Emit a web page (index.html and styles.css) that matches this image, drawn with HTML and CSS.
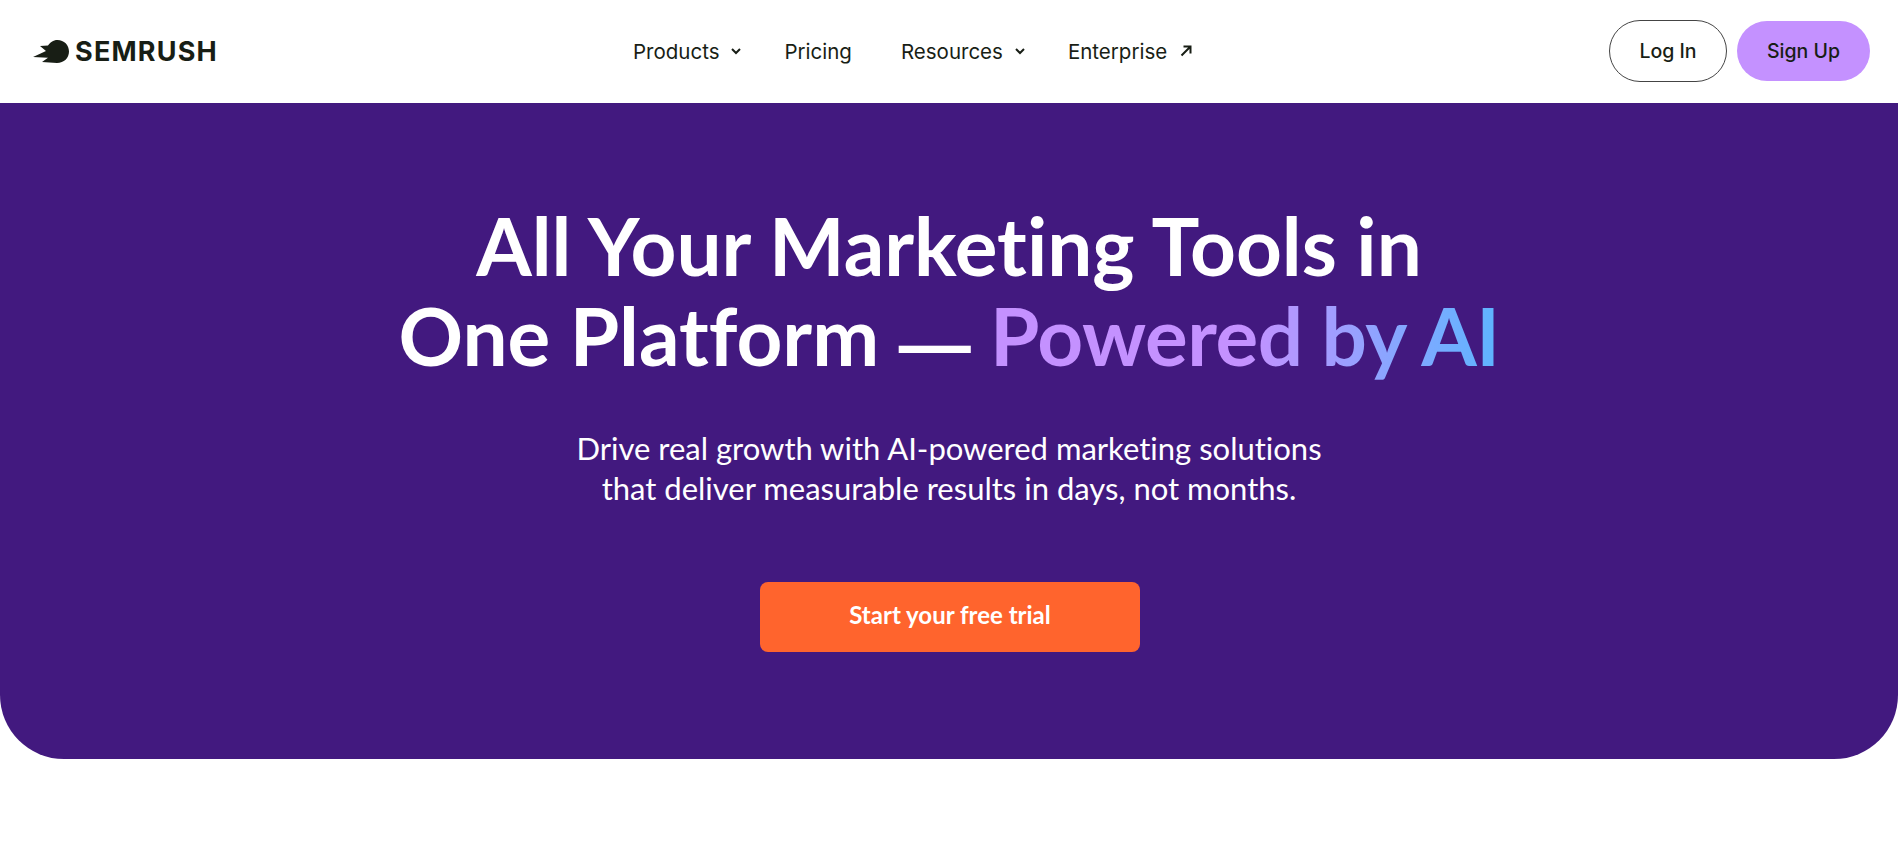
FILE: index.html
```html
<!DOCTYPE html>
<html lang="en">
<head>
    <meta charset="UTF-8">
    <meta name="viewport" content="width=device-width, initial-scale=1.0">
    <title>Semrush</title>
    <link rel="stylesheet" href="styles.css">
</head>
<body>
    <header class="topbar">
        <a class="logo" href="#">
            <svg class="logo-mark" viewBox="0 0 36 23" width="36" height="23">
                <path d="M36 11.500C36 18 31 23 24 23L9 22L15 17.800L0 17L13 11L7 6L15 5.500C17 2.500 20 0 24.500 0C31 0 36 5 36 11.500Z" fill="#181e15"/>
            </svg>
            <span class="logo-text">SEMRUSH</span>
        </a>
        <nav class="menu">
            <a class="menu-item" href="#">Products
                <svg class="chev" viewBox="0 0 12 8" width="12" height="8"><path d="M2 2l4 4 4-4" fill="none" stroke="#181e15" stroke-width="2"/></svg>
            </a>
            <a class="menu-item" href="#">Pricing</a>
            <a class="menu-item" href="#">Resources
                <svg class="chev" viewBox="0 0 12 8" width="12" height="8"><path d="M2 2l4 4 4-4" fill="none" stroke="#181e15" stroke-width="2"/></svg>
            </a>
            <a class="menu-item" href="#">Enterprise
                <svg class="arrow" viewBox="0 0 12 12" width="12" height="12"><path d="M1.500 10.500L10 2M3.500 1.500H10.500V8.500" fill="none" stroke="#181e15" stroke-width="2"/></svg>
            </a>
        </nav>
        <div class="auth">
            <a class="btn btn-login" href="#">Log In</a>
            <a class="btn btn-signup" href="#">Sign Up</a>
        </div>
    </header>

    <section class="hero">
        <h1>All Your Marketing Tools in<br>One Platform <span class="dash">—</span> <span class="accent">Powered by AI</span></h1>
        <p>Drive real growth with AI-powered marketing solutions<br>that deliver measurable results in days, not months.</p>
        <a class="cta" href="#">Start your free trial</a>
    </section>
</body>
</html>
```

FILE: styles.css
```css
* {
    box-sizing: border-box;
}
body {
    margin: 0;
    background: #fff;
    color: #181e15;
    font-family: Inter, sans-serif;
}
a {
    color: inherit;
    text-decoration: none;
}
.topbar {
    display: flex;
    align-items: center;
    height: 103px;
    padding: 0 28px 1px 33px;
}
.logo {
    display: flex;
    align-items: center;
    gap: 6px;
    width: 600px;
}
.logo-text {
    font-size: 27px;
    font-weight: 700;
    letter-spacing: 1.2px;
}
.menu {
    display: flex;
    align-items: center;
    flex: 1;
    gap: 49px;
    font-size: 20.500px;
}
.menu-item {
    display: flex;
    align-items: center;
    gap: 11px;
}
.chev {
    margin-right: -7px;
}
.arrow {
    margin-left: 2px;
}
.auth {
    display: flex;
    align-items: center;
    gap: 10px;
}
.btn {
    display: flex;
    align-items: center;
    justify-content: center;
    height: 60px;
    border-radius: 30px;
    font-size: 19.500px;
    font-weight: 500;
}
.btn-login {
    width: 118px;
    height: 62px;
    border-radius: 31px;
    border: 1px solid #444;
}
.btn-signup {
    width: 133px;
    background: #c491ff;
}
.hero {
    display: flex;
    flex-direction: column;
    align-items: center;
    height: 656px;
    padding-top: 97px;
    background: #42197f;
    border-radius: 0 0 64px 64px;
    color: #fff;
    font-family: Lato, sans-serif;
    font-variant-ligatures: none;
    text-align: center;
}
.hero h1 {
    margin: 0;
    font-size: 80px;
    font-weight: 700;
    line-height: 90px;
}
.dash {
    font-family: "Liberation Sans", sans-serif;
    font-size: 72px;
    line-height: 1;
    vertical-align: -3px;
}
.accent {
    background: linear-gradient(90deg, #c491ff 50%, #5db5ff 100%);
    -webkit-background-clip: text;
    background-clip: text;
    color: transparent;
    letter-spacing: -0.5px;
}
.hero p {
    margin: 48px 0 0;
    font-size: 31px;
    line-height: 40px;
}
.cta {
    display: flex;
    align-items: center;
    justify-content: center;
    width: 380px;
    height: 70px;
    margin: 74px 0 0 2px;
    padding-bottom: 5px;
    background: #ff642d;
    border-radius: 8px;
    font-size: 24px;
    font-weight: 700;
}
```
